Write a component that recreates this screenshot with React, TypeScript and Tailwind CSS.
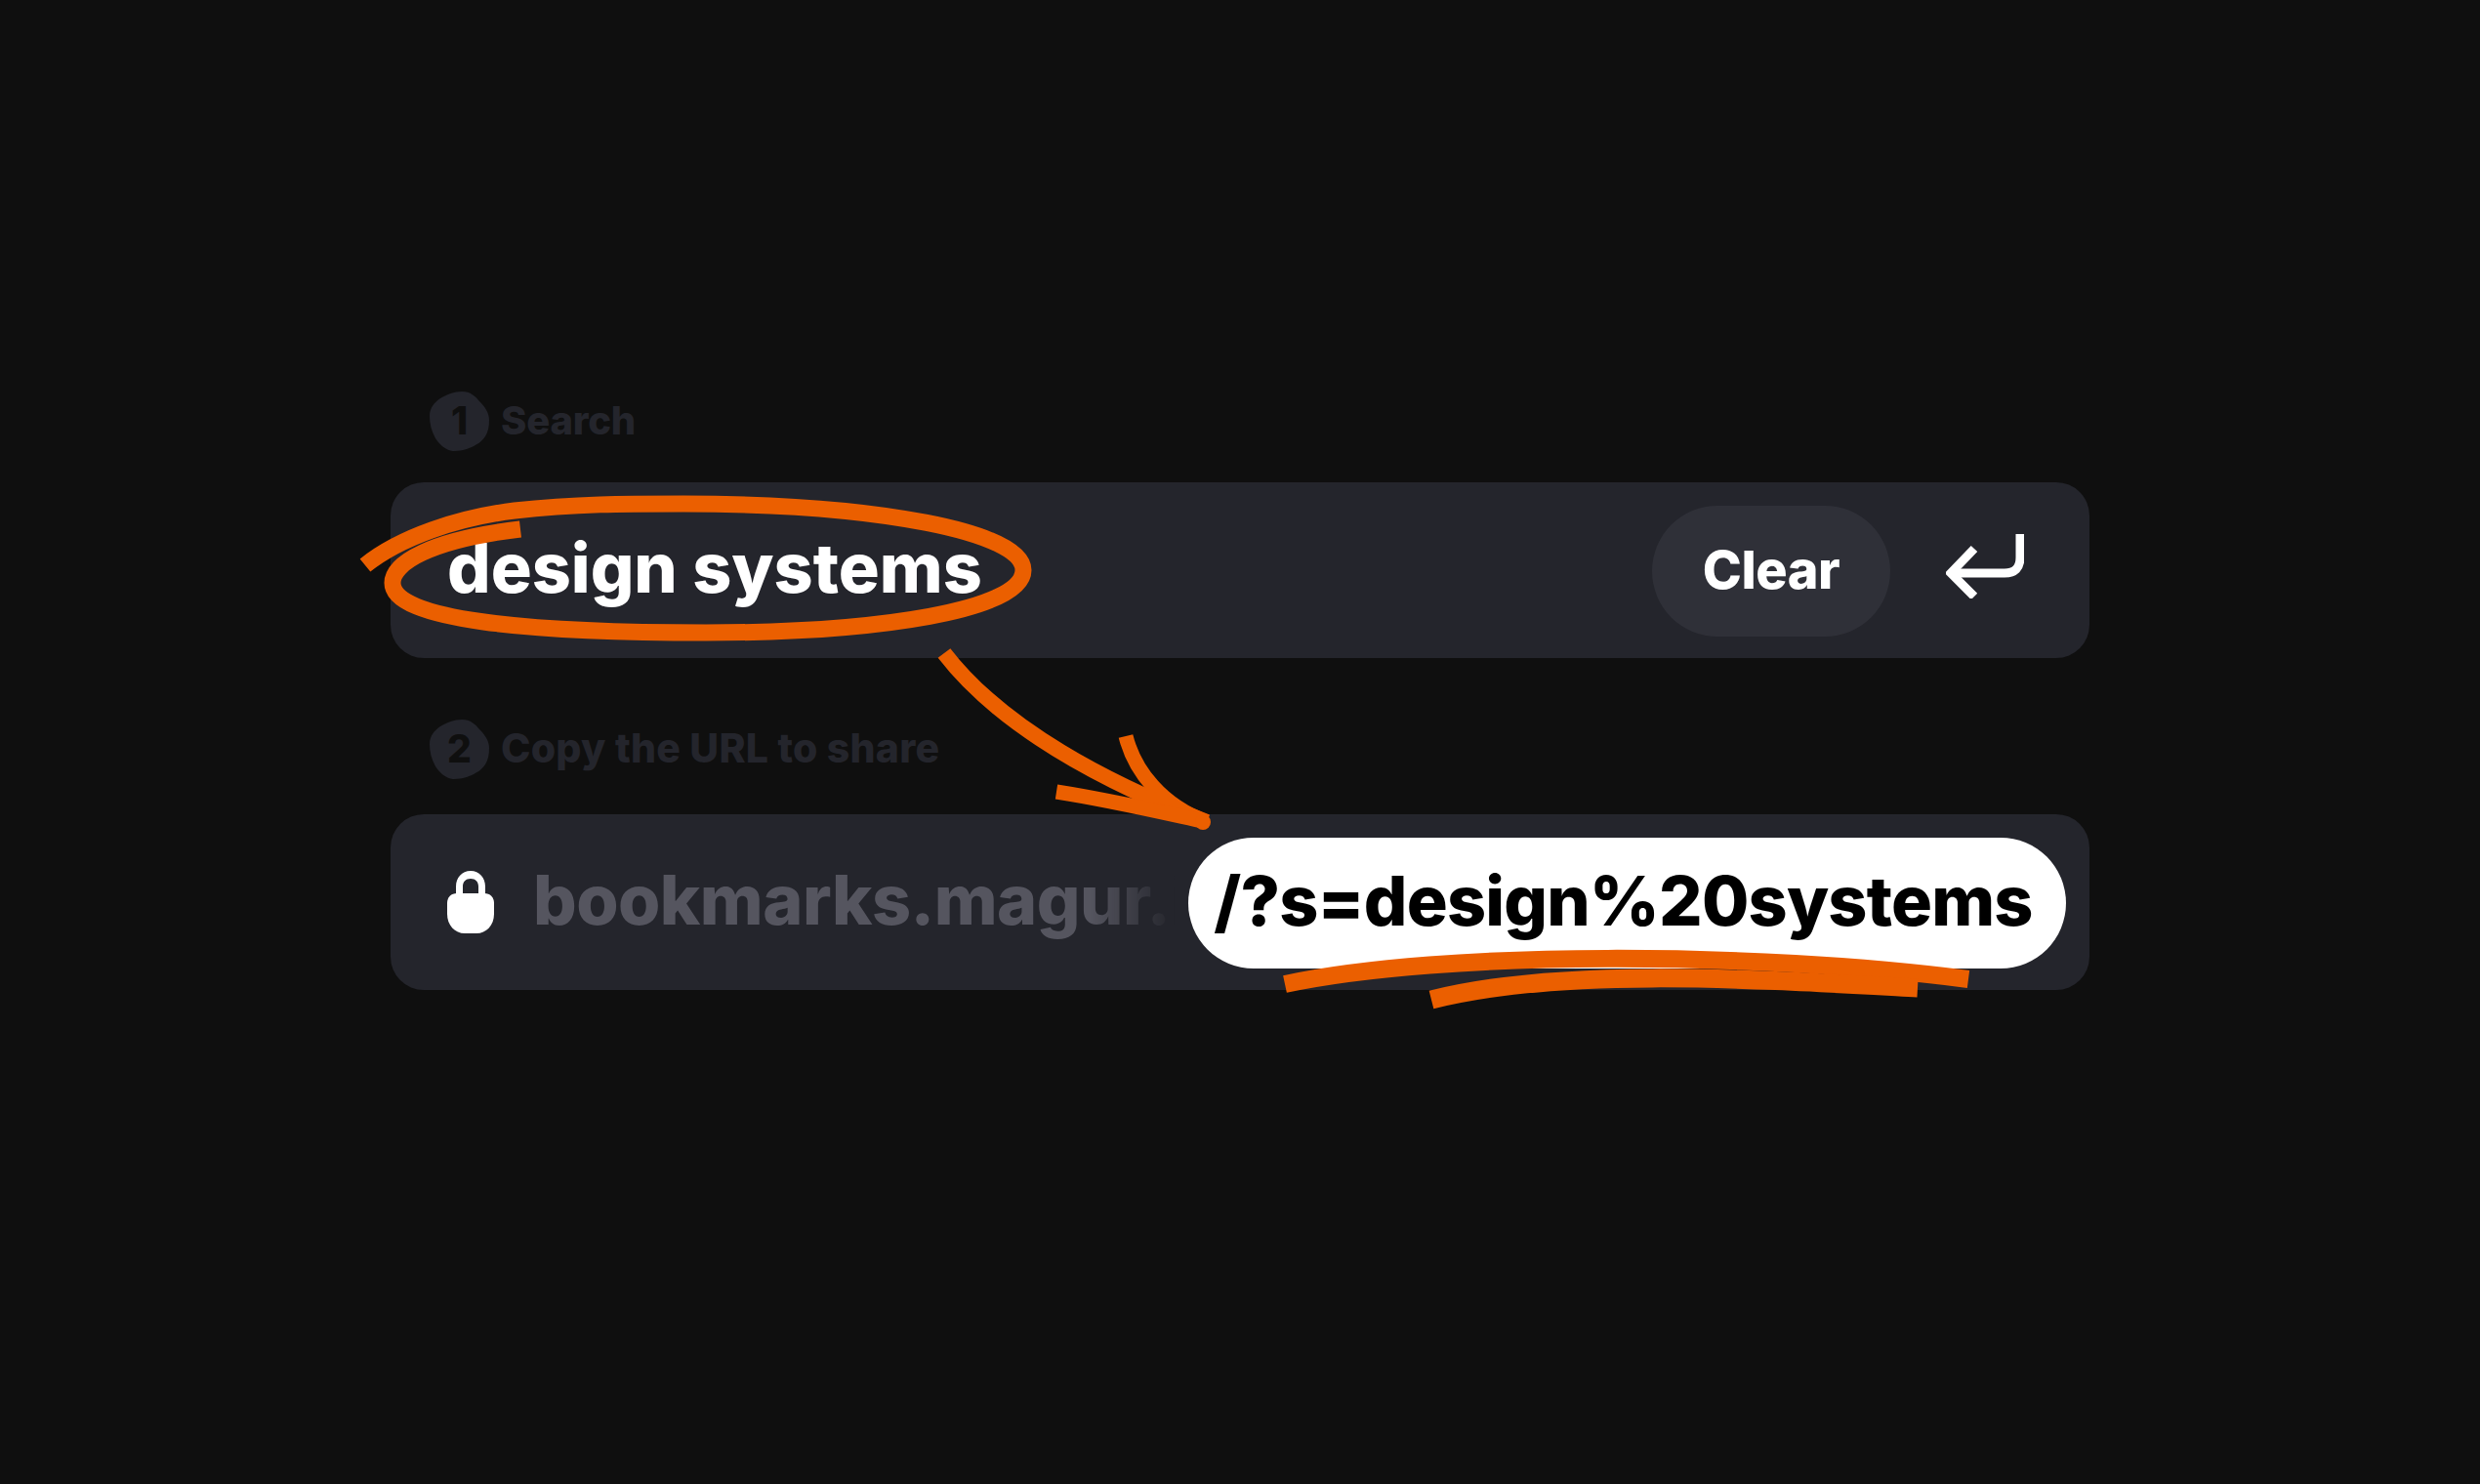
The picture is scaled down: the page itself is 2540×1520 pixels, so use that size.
const font = "font-['Inter','Liberation_Sans',sans-serif]"
const blobPath = "M33 0C42 0 47 5 51 10C57 16 61 22 61 29C61 36 60 41 57 46C53 52 49 54 43 57C36 60 30 61 24 61C16 60 10 54 6 48C2 41 0 33 0 25C0 17 5 11 11 7C18 3 25 0 33 0Z"

const Blob = ({ n }: { n: string }) => (
  <span className="relative flex h-[61px] w-[61px] shrink-0 items-center justify-center">
    <svg viewBox="0 0 61 61" className="absolute inset-0 h-full w-full">
      <path d={blobPath} fill="#24252c" />
    </svg>
    <span className="relative text-[39px] font-extrabold text-[#0f0f0f]">{n}</span>
  </span>
)

const Label = ({ n, className, children }: { n: string; className: string; children: string }) => (
  <div className={`ml-10 flex h-[60px] items-center gap-3 font-extrabold text-[#24252c] ${className}`}>
    <Blob n={n} />
    {children}
  </div>
)

const Scribbles = () => (
  <svg viewBox="0 0 2540 1520" className="pointer-events-none absolute inset-0 h-full w-full" fill="none" stroke="#eb5f00" strokeWidth="17">
    <path d="M374 579C410 550 470 530 527 523C590 516 640 516 700 516C900 516 1048 545 1048 584C1048 625 900 648 723 648C540 648 402 635 402 597C402 577 440 553 533 542" />
    <path d="M967 669C1010 725 1090 785 1236 842" strokeWidth="16" />
    <path d="M1153 754C1162 790 1190 825 1236 842" strokeWidth="15" />
    <path d="M1082 811C1140 820 1190 832 1236 842" strokeWidth="15" />
    <circle cx="1232" cy="842" r="8" fill="#eb5f00" stroke="none" />
    <path d="M1316 1008C1480 973 1800 975 2016 1003" strokeWidth="18" />
    <path d="M1466 1024C1600 990 1800 1003 1964 1012" strokeWidth="19" />
  </svg>
)

export default function App() {
  return (
    <div className={`relative flex h-[1520px] w-[2540px] flex-col overflow-hidden bg-[#0f0f0f] pl-[400px] pr-[400px] pt-[401px] ${font}`}>
      <Label n="1" className="text-[40px] tracking-[-0.2px]">Search</Label>

      <div className="mt-[33px] flex h-[180px] items-center rounded-[34px] bg-[#24252c] pl-[58px] pr-[67px]">
        <span className="flex-1 pb-[6px] text-[70px] font-extrabold text-white">design systems</span>
        <span className="mt-[2px] flex h-[134px] w-[244px] items-center justify-center rounded-full bg-[#2f3038] pb-[4px] text-[54px] font-extrabold tracking-[-0.5px] text-white">Clear</span>
        <svg viewBox="0 0 80 66" className="mb-[8px] ml-[57px] h-[66px] w-[80px]" fill="none" stroke="white" strokeWidth="9">
          <path d="M76 0V24Q76 40 60 40H6" />
          <path d="M29 15L5 40L29 64" />
        </svg>
      </div>

      <div className="mt-[63px]">
        <Label n="2" className="text-[41px] tracking-[0.25px]">Copy the URL to share</Label>
      </div>

      <div className="mt-[37px] flex h-[180px] items-center rounded-[34px] bg-[#24252c] pl-[58px] pr-[24px]">
        <svg viewBox="0 0 48 64" className="h-[64px] w-[48px] shrink-0" fill="white">
          <path d="M10 23H38C44 23 48 27 48 33V44C48 56 40 64 30 64H18C8 64 0 56 0 44V33C0 27 4 23 10 23Z" />
          <path d="M9 24V16C9 7 15 0 24 0C33 0 39 7 39 16V24H32V16C32 11 29 8 24 8C19 8 16 11 16 16V24Z" />
        </svg>
        <div className="ml-[40px] min-w-0 flex-1 overflow-hidden whitespace-nowrap pb-[6px] text-[70px] font-extrabold tracking-[-0.5px] text-[#55555f] [mask-image:linear-gradient(to_right,black_85%,transparent_98%)]">
          bookmarks.magur.in
        </div>
        <span className="mt-[2px] flex h-[134px] w-[899px] shrink-0 items-center justify-center rounded-full bg-white pb-[6px] pr-[8px] text-[70px] font-extrabold tracking-[-0.8px] text-black">/?s=design%20systems</span>
      </div>

      <Scribbles />
    </div>
  )
}
